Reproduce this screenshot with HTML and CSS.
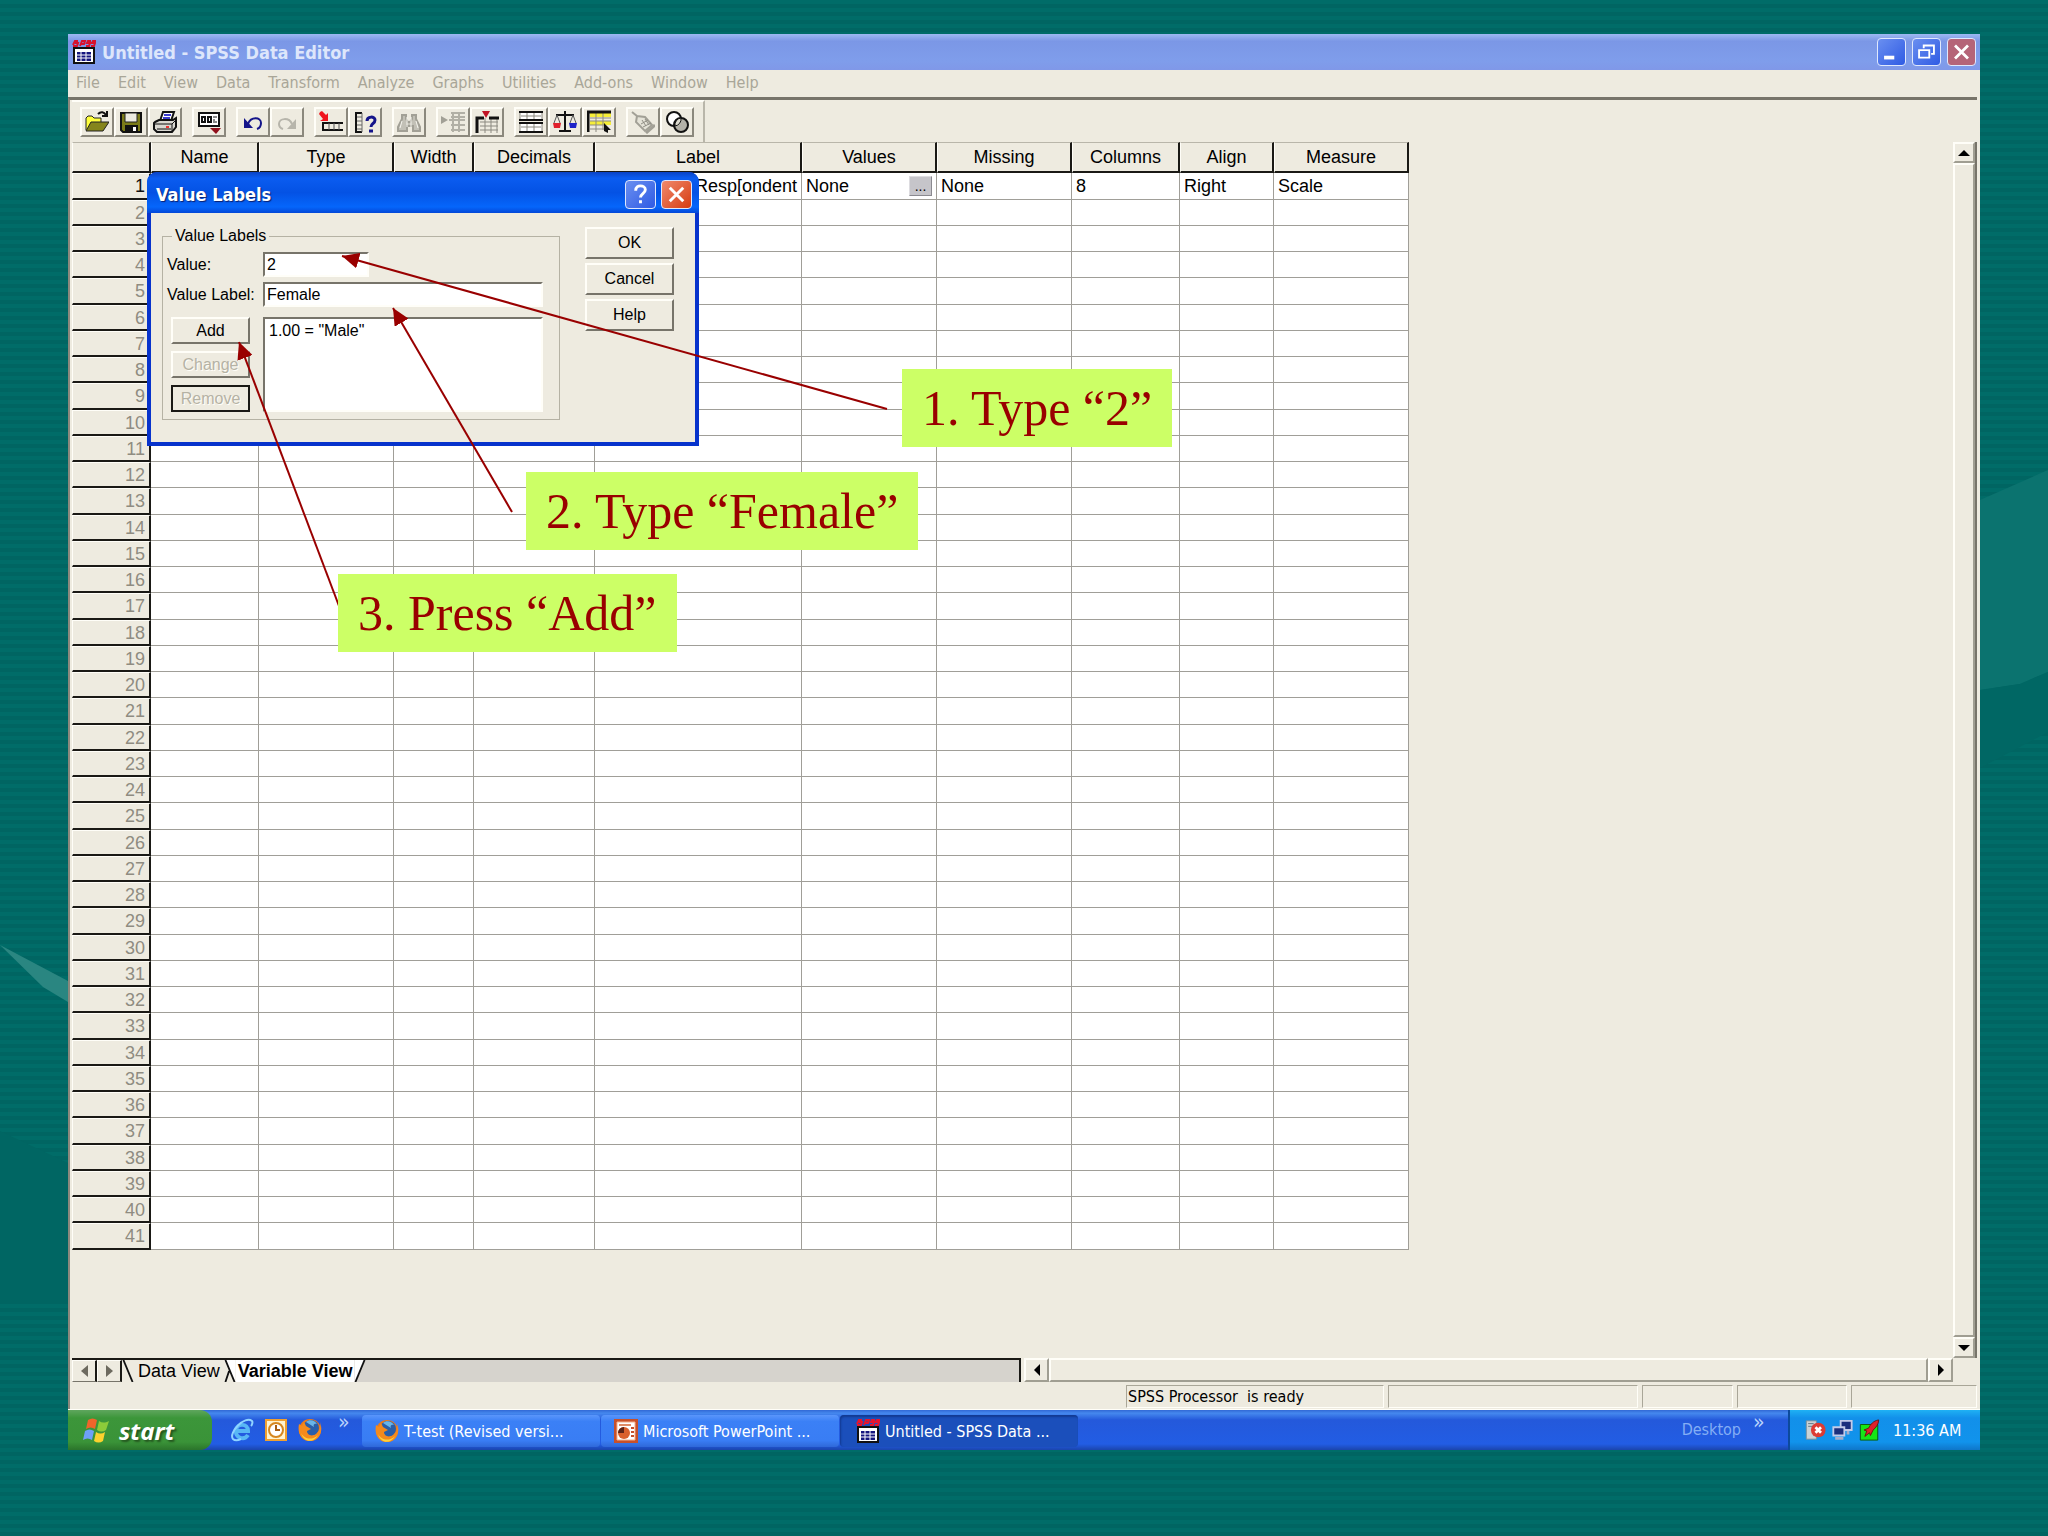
FILE: index.html
```html
<!DOCTYPE html>
<html lang="en">
<head>
    <meta charset="UTF-8">
    <title>Untitled - SPSS Data Editor</title>
    <link rel="stylesheet" href="styles.css">
</head>
<body>
    <svg class="backdrop" aria-hidden="true">
        <polygon points="0,945 68,981 68,1002 43,987" fill="#2a8681"/>
        <polygon points="0,1131 68,1163 68,1300 0,1300" fill="#006663"/>
        <polygon points="1980,500 2048,470 2048,672 2020,684 1980,690" fill="#0b736f"/>
        <polygon points="1980,690 2020,684 2048,672 2048,732 1980,768" fill="#006764"/>
    </svg>

    <main class="window">
        <header class="titlebar">
            <svg class="app-icon" viewBox="0 0 24 24">
                <path d="M1 5l2-4h3M3 3h3l-1 3H1M8 6l2-5h3l-1 3H9M14 6h3l1-3h-3l1-2h3M19 6h3l1-3h-3l1-2h3" stroke="#d8112c" stroke-width="2" fill="none"/>
                <rect x="1" y="7" width="22" height="17" fill="#111"/>
                <rect x="3" y="9" width="18" height="13" fill="#fff"/>
                <path d="M5 12h14v9H5z" fill="#15157e"/>
                <path d="M5 15h14M5 18h14M9 12v9M14 12v9" stroke="#fff"/>
            </svg>
            <h1>Untitled - SPSS Data Editor</h1>
            <button class="win-btn" aria-label="Minimize"><svg viewBox="0 0 28 28"><path d="M6 20h11" stroke="#fff" stroke-width="4"/></svg></button>
            <button class="win-btn" aria-label="Restore"><svg viewBox="0 0 28 28"><path d="M11 10V7h11v9h-3M10 7h12" fill="none" stroke="#fff" stroke-width="2"/><path d="M6 12h11v8H6zM6 12h11" fill="none" stroke="#fff" stroke-width="2"/></svg></button>
            <button class="win-btn close-dim" aria-label="Close"><svg viewBox="0 0 28 28"><path d="M7 7l14 14M21 7L7 21" stroke="#fff" stroke-width="3"/></svg></button>
        </header>

        <nav class="menubar">
            <a href="#">File</a><a href="#">Edit</a><a href="#">View</a><a href="#">Data</a><a href="#">Transform</a><a href="#">Analyze</a><a href="#">Graphs</a><a href="#">Utilities</a><a href="#">Add-ons</a><a href="#">Window</a><a href="#">Help</a>
        </nav>

        <div class="client">
            <div class="toolbar">
                <div class="tool-group">
                    <button aria-label="Open"><svg viewBox="0 0 24 24"><path d="M1 20V8l2-2h4l2 2h7v4" fill="#ffff3c" stroke="#222"/><path d="M1 21l5-9h18l-6 9z" fill="#85851c" stroke="#222"/><path d="M13 4c3-3 6-2 8 1M22 1v5h-5" fill="none" stroke="#111" stroke-width="2"/></svg></button>
                    <button aria-label="Save"><svg viewBox="0 0 24 24"><path d="M2 3h20v19H4l-2-2z" fill="#7b7b18" stroke="#111" stroke-width="2"/><path d="M6 3h12v9H6z" fill="#eceadf" stroke="#222"/><path d="M6 15h13v7H6z" fill="#111"/><path d="M14 17h3v4h-3z" fill="#fff"/></svg></button>
                    <button aria-label="Print"><svg viewBox="0 0 24 24"><path d="M7 11l3-9h11l-3 9" fill="#fff" stroke="#111" stroke-width="2"/><path d="M11 5h7M10 8h7" stroke="#3c3ccc" stroke-width="2"/><path d="M2 12l4-2h14l3-2v9l-4 5H4l-3-3v-6z" fill="#d9d7d0" stroke="#111" stroke-width="2"/><path d="M2 14h17l4-4M19 14v8M4 19h14" fill="none" stroke="#111"/><path d="M13 17h3" stroke="#e33" stroke-width="2"/></svg></button>
                </div>
                <div class="tool-group">
                    <button aria-label="Dialog recall"><svg viewBox="0 0 24 24"><path d="M2 3h20v13H2z" fill="#fff" stroke="#111" stroke-width="2"/><path d="M5 7h3v5H5zM11 7h3v5h-3z" fill="none" stroke="#111" stroke-width="2"/><path d="M16 7h4M16 10h2M16 12h4" stroke="#111"/><path d="M13 18h11l-5 6z" fill="#91101c"/></svg></button>
                </div>
                <div class="tool-group">
                    <button aria-label="Undo"><svg viewBox="0 0 24 24"><path d="M7 14c3-8 13-7 13-1 0 3-1 5-4 6" fill="none" stroke="#14148a" stroke-width="2"/><path d="M3 8v10h9z" fill="#14148a"/></svg></button>
                    <button disabled aria-label="Redo"><svg viewBox="0 0 24 24"><path d="M17 14C14 7 4 8 4 14c0 3 1 4 4 5" fill="none" stroke="#b7b5ab" stroke-width="2"/><path d="M21 9v10h-9z" fill="#b7b5ab"/></svg></button>
                </div>
                <div class="tool-group">
                    <button aria-label="Go to case"><svg viewBox="0 0 24 24"><path d="M1 2l2-1 4 4 2-2v8H1l3-2-4-5z" fill="#f0141e"/><path d="M4 12v8h20M4 13h20" fill="none" stroke="#111" stroke-width="2"/><path d="M10 13v7M15 13v7M20 13v7" stroke="#555"/></svg></button>
                    <button aria-label="Variables"><svg viewBox="0 0 24 24"><path d="M3 3h6M3 2v20h6" fill="none" stroke="#111" stroke-width="2"/><path d="M4 7h5M4 11h5M4 15h5M4 19h5M9 3v19" stroke="#666"/><path d="M14 11c0-5 8-5 8-1 0 4-4 3-4 7M16 21h4" fill="none" stroke="#14148a" stroke-width="3"/></svg></button>
                </div>
                <div class="tool-group">
                    <button disabled aria-label="Find"><svg viewBox="0 0 24 24"><path d="M5 5h4v4l2 3h2l2-3V5h4v4l4 8v4h-7v-5h-6v5H1v-4l4-8z" fill="#c2c0b6" stroke="#a2a096" stroke-width="2"/><path d="M5 11l-2 7M19 11l2 7M10 7v10M14 7v10" stroke="#f6f5ee"/></svg></button>
                </div>
                <div class="tool-group">
                    <button disabled aria-label="Insert case"><svg viewBox="0 0 24 24"><path d="M0 6l7 4-7 4z" fill="#a2a096"/><path d="M8 10h16M10 3h14M10 7h14M10 15h14M10 20h14M12 2v20M18 2v20" stroke="#b2b0a6" stroke-width="2"/></svg></button>
                    <button aria-label="Insert variable"><svg viewBox="0 0 24 24"><path d="M5 12h18M5 16h18M5 20h18M10 8v15M16 8v15M22 8v15" stroke="#8b8980"/><path d="M2 23V8h7M14 8h10" fill="none" stroke="#111" stroke-width="3"/><path d="M7 1h8l-4 7z" fill="#c01224"/></svg></button>
                </div>
                <div class="tool-group">
                    <button aria-label="Split file"><svg viewBox="0 0 24 24"><path d="M1 2h22v8H1zM1 13h22v9H1z" fill="#fff" stroke="#8b8980"/><path d="M2 6h20M2 17h20M8 2v8M15 2v8M8 13v9M15 13v9" stroke="#8b8980"/><path d="M0 2h24M0 10h24M0 13h24M0 22h24" stroke="#111" stroke-width="2"/></svg></button>
                    <button aria-label="Weight cases"><svg viewBox="0 0 24 24"><path d="M12 1v20M3 5h18M6 21h12" stroke="#111" stroke-width="2"/><path d="M4 5L1 13M4 5l3 8M20 5l-3 8M20 5l3 8" stroke="#555"/><path d="M0 13h8l-1 5H1z" fill="#e0202c"/><path d="M16 13h8l-1 5h-6z" fill="#1c22c8"/></svg></button>
                    <button aria-label="Select cases"><svg viewBox="0 0 24 24"><path d="M3 3h21v4H3zM3 11h21v4H3z" fill="#f6ee38"/><path d="M3 8h21M3 11h21M3 15h14M3 19h14M9 3v19M16 3v17" stroke="#8b8980"/><path d="M1 22V2h23" fill="none" stroke="#111" stroke-width="3"/><path d="M17 13l7 7h-3v3l-4-2z" fill="#111"/></svg></button>
                </div>
                <div class="tool-group">
                    <button disabled aria-label="Value labels"><svg viewBox="0 0 24 24"><path d="M1 2l5 4 8 1 7 8-7 6-9-9 1-6" fill="#e5e3d8" stroke="#a2a096" stroke-width="2"/><path d="M11 10l4 6M14 9l4 6M10 14l7-4M12 17l8-4" stroke="#8f8d84"/><path d="M15 23l9-8" stroke="#a2a096" stroke-width="3"/></svg></button>
                    <button aria-label="Use sets"><svg viewBox="0 0 24 24"><circle cx="9" cy="9" r="7" fill="#fff" stroke="#111" stroke-width="2"/><circle cx="16" cy="15" r="7" fill="#b3b1a8" stroke="#111" stroke-width="2"/><path d="M10 16a7 7 0 0 1 6-8 7 7 0 0 1-6 8z" fill="#dddbd0" stroke="#111"/></svg></button>
                </div>
            </div>

            <div class="sheet">
                <div class="sheet-body">
                    <table class="grid">
                        <colgroup>
                            <col class="c-num"><col class="c-name"><col class="c-wide"><col class="c-width"><col class="c-decimals"><col class="c-label">
                            <col class="c-wide"><col class="c-wide"><col class="c-name"><col class="c-align"><col class="c-wide">
                        </colgroup>
                        <thead>
                            <tr><th></th><th>Name</th><th>Type</th><th>Width</th><th>Decimals</th><th>Label</th><th>Values</th><th>Missing</th><th>Columns</th><th>Align</th><th>Measure</th></tr>
                        </thead>
                        <tbody id="rows">
                            <tr class="filled">
                                <th>1</th><td></td><td></td><td></td><td></td>
                                <td class="right">Resp[ondent</td>
                                <td><div class="cell-edit">None <button aria-label="Edit values">...</button></div></td>
                                <td>None</td><td>8</td><td>Right</td><td>Scale</td>
                            </tr>
                        </tbody>
                    </table>
                </div>
                <div class="vscroll">
                    <button aria-label="Scroll up"><svg viewBox="0 0 12 6"><path d="M6 0l6 6H0z"/></svg></button>
                    <div class="thumb"></div>
                    <button aria-label="Scroll down"><svg viewBox="0 0 12 6"><path d="M0 0h12L6 6z"/></svg></button>
                </div>
            </div>

            <div class="tabrow">
                <div class="tabs">
                    <button class="tab-nav" aria-label="Previous tab"><svg viewBox="0 0 7 12"><path d="M7 0v12L0 6z"/></svg></button>
                    <button class="tab-nav" aria-label="Next tab"><svg viewBox="0 0 7 12"><path d="M0 0v12l7-6z"/></svg></button>
                    <svg class="slant" viewBox="0 0 12 24"><path d="M1 0l10 24" /></svg>
                    <button class="tab">Data View</button>
                    <svg class="slant" viewBox="0 0 12 24"><path d="M0 0h12v24z" fill="#fff" stroke="none"/><path d="M1 0l10 24M5 12L1 24"/></svg>
                    <button class="tab active">Variable View</button>
                    <svg class="slant" viewBox="0 0 12 24"><path d="M0 0h11L1 24H0z" fill="#fff" stroke="none"/><path d="M11 0L1 24"/></svg>
                </div>
                <div class="hscroll">
                    <button aria-label="Scroll left"><svg viewBox="0 0 6 12"><path d="M6 0v12L0 6z"/></svg></button>
                    <div class="thumb"></div>
                    <button aria-label="Scroll right"><svg viewBox="0 0 6 12"><path d="M0 0v12l6-6z"/></svg></button>
                </div>
            </div>

            <div class="statusbar">
                <span>SPSS Processor&nbsp; is ready</span><span></span><span></span><span></span><span></span>
            </div>
        </div>

        <footer class="taskbar">
            <button class="start">
                <svg viewBox="0 0 28 26"><path d="M5 3c3-2 6-2 9 0l-2 9c-3-2-6-2-9 0z" fill="#f0652a"/><path d="M16 4c3 2 6 2 10 0l-3 9c-3 2-6 2-9 0z" fill="#8ccb3a"/><path d="M2 14c3-2 6-2 9 0l-2 9c-3-2-6-2-9 0z" fill="#6ea0f6"/><path d="M13 15c3 2 6 2 9 0l-2 9c-3 2-6 2-9 0z" fill="#fbd12e"/></svg>
                start
            </button>
            <div class="quick">
                <button aria-label="Internet Explorer"><svg viewBox="0 0 24 24"><path d="M18 17c-4 6-13 3-12-5 1-7 12-7 12 1H7" fill="none" stroke="#58b7f5" stroke-width="4"/><path d="M3 21C-2 15 15-3 22 3c1 1 0 4-1 5M3 21c2 2 6 1 8 0" fill="none" stroke="#8fd3ff" stroke-width="2"/></svg></button>
                <button aria-label="Outlook"><svg viewBox="0 0 24 24"><path d="M1 1h22v22H1z" fill="#f0a030"/><path d="M3 3h18v18H3z" fill="#fff3cf"/><circle cx="12" cy="12" r="7" fill="#fff" stroke="#d5861f" stroke-width="2"/><path d="M12 7v5h4" fill="none" stroke="#a85d12" stroke-width="2"/></svg></button>
                <button aria-label="Firefox"><svg viewBox="0 0 24 24"><use href="#firefox"/></svg></button>
            </div>
            <span class="chevron">»</span>
            <div class="tasks">
                <button class="task"><svg viewBox="0 0 24 24"><g id="firefox"><circle cx="12" cy="12" r="11" fill="#ee7a18"/><circle cx="13" cy="10" r="8" fill="#2a5ea8"/><path d="M8 4c3-3 9-2 11 2-3-1-4 1-3 3z" fill="#69b5e8"/><path d="M1 6l3 2 2-4 2 4 5 3-4 2c0 4 5 6 9 3s5-7 4-12c3 7 1 17-8 19C4 24-1 16 1 6z" fill="#f58a1c"/><path d="M3 15c3 6 11 8 17 2-4 8-14 8-17-2z" fill="#fcd23e"/></g></svg>T-test (Revised versi...</button>
                <button class="task"><svg viewBox="0 0 24 24"><path d="M0 0h24v24H0z" fill="#c7502a"/><path d="M3 3h18v18H3z" fill="#fff" stroke="#f3b08c"/><path d="M5 6h12" stroke="#df8b66" stroke-width="2"/><circle cx="10" cy="14" r="6" fill="#d9602d"/><path d="M10 14V8a6 6 0 0 0-6 6z" fill="#5c2418"/><path d="M17 9h3M17 13h3M17 17h3" stroke="#c7502a" stroke-width="2"/></svg>Microsoft PowerPoint ...</button>
                <button class="task pressed"><svg viewBox="0 0 24 24"><path d="M1 5l2-4h3M3 3h3l-1 3H1M8 6l2-5h3l-1 3H9M14 6h3l1-3h-3l1-2h3M19 6h3l1-3h-3l1-2h3" stroke="#e8142c" stroke-width="2" fill="none"/><path d="M1 7h22v17H1z" fill="#111"/><path d="M3 9h18v13H3z" fill="#fff"/><path d="M5 12h14v9H5z" fill="#15157e"/><path d="M5 15h14M5 18h14M9 12v9M14 12v9" stroke="#fff"/></svg>Untitled - SPSS Data ...</button>
            </div>
            <span class="desktop-label">Desktop</span>
            <span class="chevron">»</span>
            <div class="tray">
                <svg viewBox="0 0 24 24"><path d="M2 2h11v20H2z" fill="#c9d2d6" stroke="#7c8e98"/><path d="M4 5h6M4 8h6" stroke="#5f7480"/><circle cx="15" cy="12" r="8" fill="#dc3b34"/><path d="M12 9l6 6M18 9l-6 6" stroke="#fff" stroke-width="3"/></svg>
                <svg viewBox="0 0 24 24"><path d="M10 2h12v10H10z" fill="#1c2f7c" stroke="#c3cbe8" stroke-width="2"/><path d="M2 9h12v9H2z" fill="#1c2f7c" stroke="#c3cbe8" stroke-width="2"/><path d="M4 21h9M18 13v4" stroke="#a5aecb" stroke-width="3"/></svg>
                <svg viewBox="0 0 24 24"><path d="M2 6h19v17H2z" fill="#16e616" stroke="#0a5a0a"/><path d="M22 1c-6 1-9 5-11 9l-5 2 3 1-2 6 5-4 1 3 3-6c3-3 6-6 6-11z" fill="#e0202c" stroke="#6a1014"/></svg>
                <time>11:36 AM</time>
            </div>
        </footer>
    </main>

    <section class="dialog" role="dialog" aria-labelledby="dlgTitle">
        <header class="dialog-title">
            <h2 id="dlgTitle">Value Labels</h2>
            <button class="win-btn" aria-label="What's this"><svg viewBox="0 0 28 28"><path d="M9 10c0-7 10-6 10-1 0 4-5 4-5 8M14 20v3" fill="none" stroke="#fff" stroke-width="3"/></svg></button>
            <button class="win-btn close" aria-label="Close dialog"><svg viewBox="0 0 28 28"><path d="M7 7l14 14M21 7L7 21" stroke="#fff" stroke-width="3"/></svg></button>
        </header>
        <div class="dialog-body">
            <fieldset>
                <legend>Value Labels</legend>
                <div class="field"><label for="value">Value:</label><input class="short" id="value" type="text" value="2"></div>
                <div class="field"><label for="valueLabel">Value Label:</label><input id="valueLabel" type="text" value="Female"></div>
                <div class="list-row">
                    <div class="list-actions">
                        <button class="btn">Add</button>
                        <button class="btn" disabled>Change</button>
                        <button class="btn default" disabled>Remove</button>
                    </div>
                    <ul class="listbox"><li>1.00 = "Male"</li></ul>
                </div>
            </fieldset>
            <div class="dialog-actions">
                <button class="btn">OK</button>
                <button class="btn">Cancel</button>
                <button class="btn">Help</button>
            </div>
        </div>
    </section>

    <!-- step callouts and their arrows -->
    <svg class="arrows" aria-hidden="true">
        <defs>
            <marker id="head" viewBox="0 0 17 16" refX="17" refY="8" markerWidth="17" markerHeight="16" markerUnits="userSpaceOnUse" orient="auto">
                <path d="M0 0l17 8-17 8z" fill="#990000"/>
            </marker>
        </defs>
        <g stroke="#990000" stroke-width="2">
            <path d="M887 409L342 256" marker-end="url(#head)"/>
            <path d="M512 512L393 308" marker-end="url(#head)"/>
            <path d="M339 606L239 342" marker-end="url(#head)"/>
        </g>
    </svg>
    <p class="callout step-1">1. Type “2”</p>
    <p class="callout step-2">2. Type “Female”</p>
    <p class="callout step-3">3. Press “Add”</p>

    <script>
        // empty variable rows below the first one
        const rows = document.getElementById('rows');
        for (let i = 2; i <= 41; i++) {
            const tr = document.createElement('tr');
            tr.innerHTML = '<th>' + i + '</th>' + '<td></td>'.repeat(10);
            rows.appendChild(tr);
        }
    </script>
</body>
</html>
```
FILE: styles.css
```css
* {
    box-sizing: border-box;
}
body {
    position: relative;
    display: flex;
    flex-direction: column;
    min-height: 100vh;
    margin: 0;
    padding: 34px 68px 86px;
    font-family: "DejaVu Sans Condensed", "DejaVu Sans", sans-serif;
    font-size: 16px;
    background: repeating-linear-gradient(#006c68 0 4px, #006562 4px 8px);
}
h1, h2, p, ul, fieldset {
    margin: 0;
    padding: 0;
}
button {
    margin: 0;
    padding: 0;
    border: none;
    color: inherit;
    font: inherit;
}
svg {
    display: block;
}
.backdrop, .arrows {
    position: absolute;
    left: 0;
    top: 0;
    width: 100%;
    height: 100%;
    pointer-events: none;
}
.window {
    position: relative;
    flex: 1;
    display: flex;
    flex-direction: column;
    background: #eeebe0;
}

/* title bar */
.titlebar {
    display: flex;
    align-items: center;
    gap: 6px;
    height: 36px;
    padding: 0 4px;
    background: linear-gradient(#9db9f2, #7b97e6 20%, #7f9deb 75%, #8098e8);
}
.titlebar h1 {
    flex: 1;
    color: #dde6fb;
    font-size: 18px;
    font-weight: bold;
}
.app-icon {
    width: 24px;
    height: 24px;
}
.win-btn {
    width: 29px;
    height: 28px;
    border: 1px solid #dfe8fd;
    border-radius: 4px;
    background: linear-gradient(135deg, #6a8ff0, #2f5be4);
}
.win-btn svg {
    width: 100%;
    height: 100%;
}
.close-dim {
    background: #b56478;
}
.close {
    background: linear-gradient(135deg, #f08a6c, #d63c12);
}

.menubar {
    display: flex;
    gap: 18px;
    height: 27px;
    padding: 2px 8px;
    line-height: 22px;
    font-size: 16px;
}
.menubar a {
    color: #a9a698;
    text-decoration: none;
}

.client {
    flex: 1;
    display: flex;
    flex-direction: column;
    margin-right: 3px;
    padding-left: 2px;
    border-top: 3px solid #77746a;
    border-left: 2px solid #8b887d;
}

/* toolbar */
.toolbar {
    display: flex;
    align-items: center;
    gap: 10px;
    align-self: flex-start;
    height: 42px;
    padding: 0 9px 1px 8px;
    border-top: 2px solid #fffef8;
    border-right: 2px solid #b9b6aa;
}
.tool-group {
    display: flex;
}
.tool-group button {
    display: grid;
    place-items: center;
    width: 34px;
    height: 30px;
    background: #eeebe0;
    border: 2px solid;
    border-color: #fffef8 #8b887d #8b887d #fffef8;
}
.tool-group svg {
    width: 24px;
    height: 24px;
}

/* variable grid */
.sheet {
    flex: 1;
    display: flex;
}
.sheet-body {
    flex: 1;
}
.grid {
    table-layout: fixed;
    width: min-content;
    border-collapse: separate;
    border-spacing: 0;
    font-family: "Liberation Sans", Arial, sans-serif;
    font-size: 18px;
    line-height: 22px;
}
.c-num { width: 79px; }
.c-name { width: 108px; }
.c-wide { width: 135px; }
.c-width { width: 80px; }
.c-decimals { width: 121px; }
.c-label { width: 207px; }
.c-align { width: 94px; }
.grid th, .grid td {
    height: 26px;
    padding: 0 4px;
    white-space: nowrap;
    overflow: hidden;
}
.grid tbody tr:nth-child(4n+1) > * {
    height: 27px;
}
.grid th {
    font-weight: normal;
    background: #eeebe0;
    border: 1px solid;
    border-color: #fffef8 #1a1915 #1a1915 #fffef8;
    border-right-width: 2px;
    border-bottom-width: 2px;
}
.grid thead th {
    height: 31px;
    border-top-color: #b9b6aa;
}
.grid tbody th {
    text-align: right;
    color: #8f8c81;
}
.grid .filled th {
    color: #111;
}
.grid td {
    background: #fff;
    border-right: 1px solid #a09e98;
    border-bottom: 1px solid #a09e98;
}
.grid .right {
    text-align: right;
}
.cell-edit {
    display: flex;
    justify-content: space-between;
    align-items: center;
}
.cell-edit button {
    width: 23px;
    height: 20px;
    line-height: 12px;
    font-size: 14px;
    background: #c6c5ca;
    border: 1px solid;
    border-color: #dddce0 #8b8a90 #8b8a90 #dddce0;
}

/* scroll bars */
.vscroll, .hscroll {
    display: flex;
}
.vscroll {
    flex-direction: column;
    width: 24px;
    border-right: 2px solid #77746a;
}
.vscroll button, .hscroll button {
    display: grid;
    place-items: center;
    background: #eeebe0;
    border: 2px solid;
    border-color: #fffef8 #a09e92 #a09e92 #fffef8;
}
.vscroll button {
    height: 21px;
}
.vscroll svg {
    width: 12px;
    height: 6px;
}
.hscroll button {
    width: 25px;
}
.hscroll svg {
    width: 6px;
    height: 12px;
}
.thumb {
    flex: 1;
    border: 2px solid;
    border-color: #fffef8 #a09e92 #a09e92 #fffef8;
}

.tabrow {
    display: flex;
    gap: 3px;
    height: 24px;
    padding-right: 24px;
}
.tabs {
    flex: 102;
    display: flex;
    background: #d6d3cd;
    border-top: 2px solid #1a1915;
    border-right: 2px solid #1a1915;
    font-family: "Liberation Sans", Arial, sans-serif;
    font-size: 18px;
}
.tab-nav {
    display: grid;
    place-items: center;
    width: 25px;
    background: #eeebe0;
    border: 1px solid #fffef8;
    border-right: 2px solid #1a1915;
    border-bottom: 1px solid #77746a;
}
.tab-nav svg {
    width: 7px;
    height: 12px;
    fill: #6d6a5f;
}
.slant {
    width: 12px;
    height: 22px;
    fill: none;
    stroke: #111;
    stroke-width: 2;
    background: #eeebe0;
}
.slant:last-child {
    background: none;
}
.tab {
    padding: 0 4px;
    background: #eeebe0;
    line-height: 20px;
}
.tab.active {
    padding: 0 2px;
    font-weight: bold;
    background: #fff;
}
.hscroll {
    flex: 100;
}

.statusbar {
    display: grid;
    grid-template-columns: 258px 250px 91px 110px 126px;
    justify-content: end;
    gap: 4px;
    height: 27px;
    padding: 3px 0 1px;
    font-size: 16px;
    line-height: 21px;
}
.statusbar span {
    padding-left: 1px;
    border: 1px solid;
    border-color: #a9a698 #fffef8 #fffef8 #a9a698;
}

/* taskbar */
.taskbar {
    display: flex;
    align-items: stretch;
    height: 41px;
    border-top: 1px solid #fffef8;
    color: #fff;
    background: linear-gradient(#3168d5, #4588ee 8%, #2459db 25%, #225de4 85%, #1b45ad);
}
.start {
    display: flex;
    align-items: center;
    gap: 8px;
    width: 144px;
    padding-left: 15px;
    border-radius: 0 12px 12px 0;
    background: linear-gradient(#5fa65e, #3c963a 20%, #3a9338 80%, #2b742b);
    font: italic bold 24px "Open Sans", sans-serif;
    text-shadow: 2px 2px 2px #24551f;
}
.start svg {
    width: 28px;
    height: 26px;
}
.quick {
    display: flex;
    align-items: center;
    gap: 10px;
    padding: 0 16px 0 18px;
}
.quick button {
    background: none;
}
.quick svg, .task svg {
    width: 24px;
    height: 24px;
}
.chevron {
    width: 24px;
    font-size: 21px;
    line-height: 24px;
    color: #b9d3fb;
}
.tasks {
    flex: 1;
    display: flex;
    gap: 1px;
    padding: 5px 0 3px;
}
.task {
    display: flex;
    align-items: center;
    gap: 5px;
    width: 238px;
    padding-left: 13px;
    border-radius: 4px;
    background: linear-gradient(#5a96fb, #3b80f6 20%, #397df4 80%, #2f68d8);
}
.task.pressed {
    padding-left: 16px;
    background: #1b4fbb;
    box-shadow: inset 1px 2px 2px #123a92;
}
.desktop-label {
    margin-right: 12px;
    line-height: 40px;
    color: #84aef5;
}
.tray {
    display: flex;
    align-items: center;
    gap: 4px;
    width: 192px;
    margin-left: 11px;
    padding-left: 14px;
    border-left: 2px solid #0c4a9c;
    background: linear-gradient(#1fb1f4, #1290ea 20%, #1193ec 80%, #0f76c9);
}
.tray svg {
    width: 23px;
    height: 22px;
}
.tray time {
    margin-left: 8px;
}

/* value labels dialog */
.dialog {
    position: absolute;
    left: 147px;
    top: 172px;
    width: 552px;
    padding: 0 4px 4px;
    border-radius: 10px 10px 0 0;
    background: #0733cc;
}
.dialog-title {
    display: flex;
    align-items: center;
    gap: 5px;
    height: 41px;
    margin: 0 -4px;
    padding: 4px 7px 0 9px;
    border-radius: 10px 10px 0 0;
    background: linear-gradient(#0a42c4, #0b5cf0 15%, #0452e4 50%, #0566fb 85%, #0448d8);
}
.dialog-title h2 {
    flex: 1;
    color: #fff;
    font-size: 18px;
    text-shadow: 1px 1px 1px #0a1f6e;
}
.dialog-title .win-btn {
    width: 31px;
    height: 29px;
}
.dialog-body {
    display: flex;
    justify-content: space-between;
    align-items: flex-start;
    padding: 14px 21px 22px 11px;
    background: #eeebe0;
    font-family: "Liberation Sans", Arial, sans-serif;
}
.dialog fieldset {
    width: 398px;
    padding: 7px 16px 7px 4px;
    border: 1px solid #b5b2a4;
}
.dialog legend {
    margin-left: 5px;
    padding: 0 3px;
    line-height: 18px;
}
.field {
    display: flex;
    align-items: center;
    margin-bottom: 5px;
}
.field label {
    width: 96px;
    white-space: nowrap;
}
.field input {
    flex: 1;
    min-width: 0;
    height: 25px;
    padding: 0 2px;
    font: inherit;
}
.field .short {
    flex: 0 0 106px;
}
.field input, .listbox {
    background: #fff;
    border: 2px solid;
    border-color: #77746a #fffef8 #fffef8 #77746a;
    border-radius: 0;
}
.list-row {
    display: flex;
    margin-top: 10px;
}
.list-actions {
    display: flex;
    flex-direction: column;
    gap: 7px;
    width: 96px;
    padding: 0 13px 0 4px;
}
.listbox {
    flex: 1;
    padding: 2px 4px;
    list-style: none;
    line-height: 20px;
}
.btn {
    height: 27px;
    background: #eeebe0;
    border: 2px solid;
    border-color: #fffef8 #77746a #77746a #fffef8;
}
.btn:disabled {
    color: #b5b2a4;
    text-shadow: 1px 1px 0 #fffef8;
}
.btn.default {
    border-color: #1a1915;
}
.dialog-actions {
    display: flex;
    flex-direction: column;
    gap: 4px;
    width: 89px;
}
.dialog-actions .btn {
    height: 32px;
}

/* callouts */
.callout {
    position: absolute;
    padding: 10px 20px;
    background: #ccff66;
    color: #990000;
    font-family: "Liberation Serif", "Times New Roman", serif;
    font-size: 50px;
    line-height: 58px;
    white-space: nowrap;
}
.step-1 {
    left: 902px;
    top: 369px;
}
.step-2 {
    left: 526px;
    top: 472px;
}
.step-3 {
    left: 338px;
    top: 574px;
}
```
